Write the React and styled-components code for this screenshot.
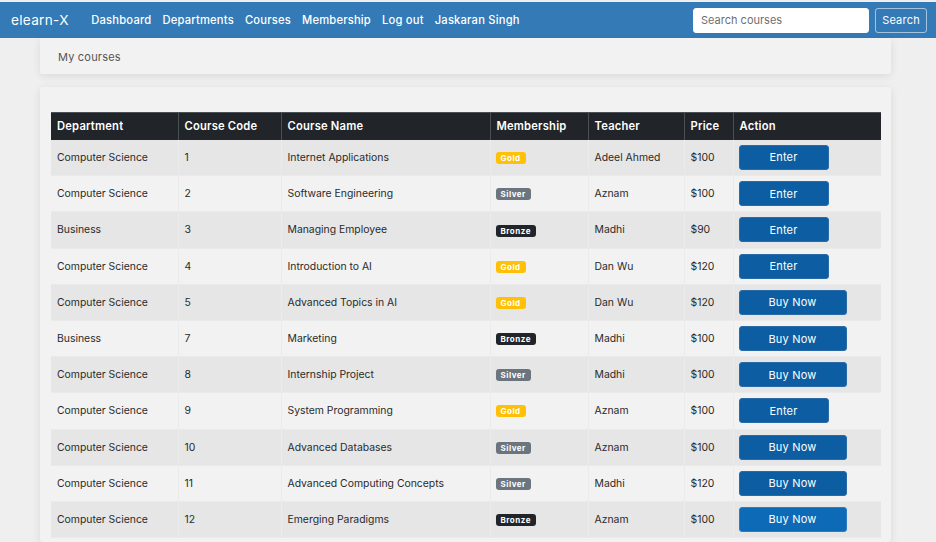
import React from "react";
import styled, { createGlobalStyle } from "styled-components";

const Global = createGlobalStyle`
  html, body { margin: 0; padding: 0; }
  body {
    background: #efefef;
    font-family: Inter, "Noto Sans", "Liberation Sans", sans-serif;
    color: #212529;
    -webkit-font-smoothing: antialiased;
  }
  * { box-sizing: border-box; }
`;

const Page = styled.div`
  padding-top: 2px;
  min-height: 542px;
`;

const Navbar = styled.nav`
  height: 36px;
  background: #337ab7;
  display: flex;
  align-items: center;
  padding: 0 9px 0 11px;
`;

const Brand = styled.a`
  color: #fff;
  font-size: 13.6px;
  font-weight: 400;
  letter-spacing: 0.3px;
  margin-right: 17px;
  text-decoration: none;
`;

const NavLinks = styled.div`
  display: flex;
  align-items: center;
`;

const NavLink = styled.a`
  color: #fff;
  font-size: 11.2px;
  font-weight: 500;
  letter-spacing: 0.2px;
  padding: 0 5.5px;
  text-decoration: none;
`;

const SearchForm = styled.form`
  margin-left: auto;
  display: flex;
  align-items: center;
  gap: 6px;
`;

const SearchInput = styled.input`
  width: 176px;
  height: 25px;
  border: 1px solid #fff;
  border-radius: 3px;
  background: #fff;
  padding: 0 7px;
  font-family: inherit;
  font-size: 11px;
  color: #333;
  outline: none;
  &::placeholder { color: #6f6f6f; }
`;

const SearchButton = styled.button`
  height: 25px;
  width: 52px;
  padding: 0;
  border: 1px solid rgba(255, 255, 255, 0.55);
  border-radius: 3px;
  background: transparent;
  color: #fff;
  font-family: inherit;
  font-size: 11px;
  letter-spacing: 0.2px;
`;

const Card = styled.section`
  margin-left: 40px;
  width: 851px;
  background: #f2f2f2;
  border-radius: 3px;
  box-shadow: 0 2px 8px rgba(0, 0, 0, 0.09);
`;

const Breadcrumb = styled(Card)`
  height: 36px;
  display: flex;
  align-items: center;
  padding-left: 18px;
  padding-top: 1px;
  font-size: 11px;
  color: #555;
  letter-spacing: 0.2px;
  border-radius: 0 0 3px 3px;
`;

const Main = styled(Card)`
  margin-top: 13px;
  padding: 25px 10px 4px 11px;
`;

const Table = styled.table`
  width: 830px;
  border-collapse: collapse;
  table-layout: fixed;
  font-size: 10.4px;
`;

const Th = styled.th`
  background: #212529;
  color: #fff;
  text-align: left;
  font-weight: 600;
  font-size: 11.2px;
  letter-spacing: 0.2px;
  height: 27px;
  padding: 0 6px;
  border-left: 1px solid #4a4f55;
  border-top: 1px solid #4a4f55;
  &:first-child { border-left: none; }
`;

const Tr = styled.tr`
  background: ${(p) => (p.$odd ? "#e6e6e6" : "#f2f2f2")};
`;

const Td = styled.td`
  height: 36.2px;
  padding: 0 6px 0 ${(p) => (p.$tight ? "5px" : "6px")};
  border-left: 1px solid #ebebeb;
  border-bottom: 1px solid #eaeaea;
  color: #2a2a2a;
  &:first-child { border-left: none; }
`;

const badgeColors = {
  Gold: "#ffc107",
  Silver: "#6c757d",
  Bronze: "#212529",
};

const Badge = styled.span`
  display: inline-block;
  background: ${(p) => badgeColors[p.$tier]};
  color: #fff;
  font-size: 8px;
  font-weight: 700;
  letter-spacing: 0.5px;
  line-height: 12px;
  padding: 0 5px;
  border-radius: 3px;
  vertical-align: middle;
`;

const ActionButton = styled.button`
  width: ${(p) => (p.$wide ? "108px" : "90px")};
  height: 25px;
  border: 1px solid ${(p) => (p.$hover ? "#2f7cc3" : "#2a6aa6")};
  border-radius: 3px;
  background: ${(p) => (p.$hover ? "#0d6ab7" : "#0c5da1")};
  color: #fff;
  font-family: inherit;
  font-size: 11px;
  letter-spacing: 0.2px;
  display: block;
`;

const columns = [
  ["Department", 127],
  ["Course Code", 103],
  ["Course Name", 209],
  ["Membership", 98],
  ["Teacher", 96],
  ["Price", 49],
  ["Action", 148],
];

const rows = [
  ["Computer Science", "1", "Internet Applications", "Gold", "Adeel Ahmed", "$100", "Enter"],
  ["Computer Science", "2", "Software Engineering", "Silver", "Aznam", "$100", "Enter"],
  ["Business", "3", "Managing Employee", "Bronze", "Madhi", "$90", "Enter"],
  ["Computer Science", "4", "Introduction to AI", "Gold", "Dan Wu", "$120", "Enter"],
  ["Computer Science", "5", "Advanced Topics in AI", "Gold", "Dan Wu", "$120", "Buy Now"],
  ["Business", "7", "Marketing", "Bronze", "Madhi", "$100", "Buy Now"],
  ["Computer Science", "8", "Internship Project", "Silver", "Madhi", "$100", "Buy Now"],
  ["Computer Science", "9", "System Programming", "Gold", "Aznam", "$100", "Enter"],
  ["Computer Science", "10", "Advanced Databases", "Silver", "Aznam", "$100", "Buy Now"],
  ["Computer Science", "11", "Advanced Computing Concepts", "Silver", "Madhi", "$120", "Buy Now"],
  ["Computer Science", "12", "Emerging Paradigms", "Bronze", "Aznam", "$100", "Buy Now"],
];

export default function App() {
  return (
    <Page>
      <Global />
      <Navbar>
        <Brand>elearn-X</Brand>
        <NavLinks>
          <NavLink>Dashboard</NavLink>
          <NavLink>Departments</NavLink>
          <NavLink>Courses</NavLink>
          <NavLink>Membership</NavLink>
          <NavLink>Log out</NavLink>
          <NavLink>Jaskaran Singh</NavLink>
        </NavLinks>
        <SearchForm onSubmit={(e) => e.preventDefault()}>
          <SearchInput placeholder="Search courses" />
          <SearchButton type="submit">Search</SearchButton>
        </SearchForm>
      </Navbar>
      <Breadcrumb>My courses</Breadcrumb>
      <Main>
        <Table>
          <colgroup>
            {columns.map(([n, w]) => (
              <col key={n} style={{ width: w }} />
            ))}
          </colgroup>
          <thead>
            <tr>
              {columns.map(([n]) => (
                <Th key={n}>{n}</Th>
              ))}
            </tr>
          </thead>
          <tbody>
            {rows.map((r, i) => (
              <Tr key={i} $odd={i % 2 === 0}>
                <Td>{r[0]}</Td>
                <Td>{r[1]}</Td>
                <Td>{r[2]}</Td>
                <Td $tight>
                  <Badge $tier={r[3]}>{r[3]}</Badge>
                </Td>
                <Td>{r[4]}</Td>
                <Td>{r[5]}</Td>
                <Td $tight>
                  <ActionButton $wide={r[6] === "Buy Now"} $hover={i === rows.length - 1}>
                    {r[6]}
                  </ActionButton>
                </Td>
              </Tr>
            ))}
          </tbody>
        </Table>
      </Main>
    </Page>
  );
}
